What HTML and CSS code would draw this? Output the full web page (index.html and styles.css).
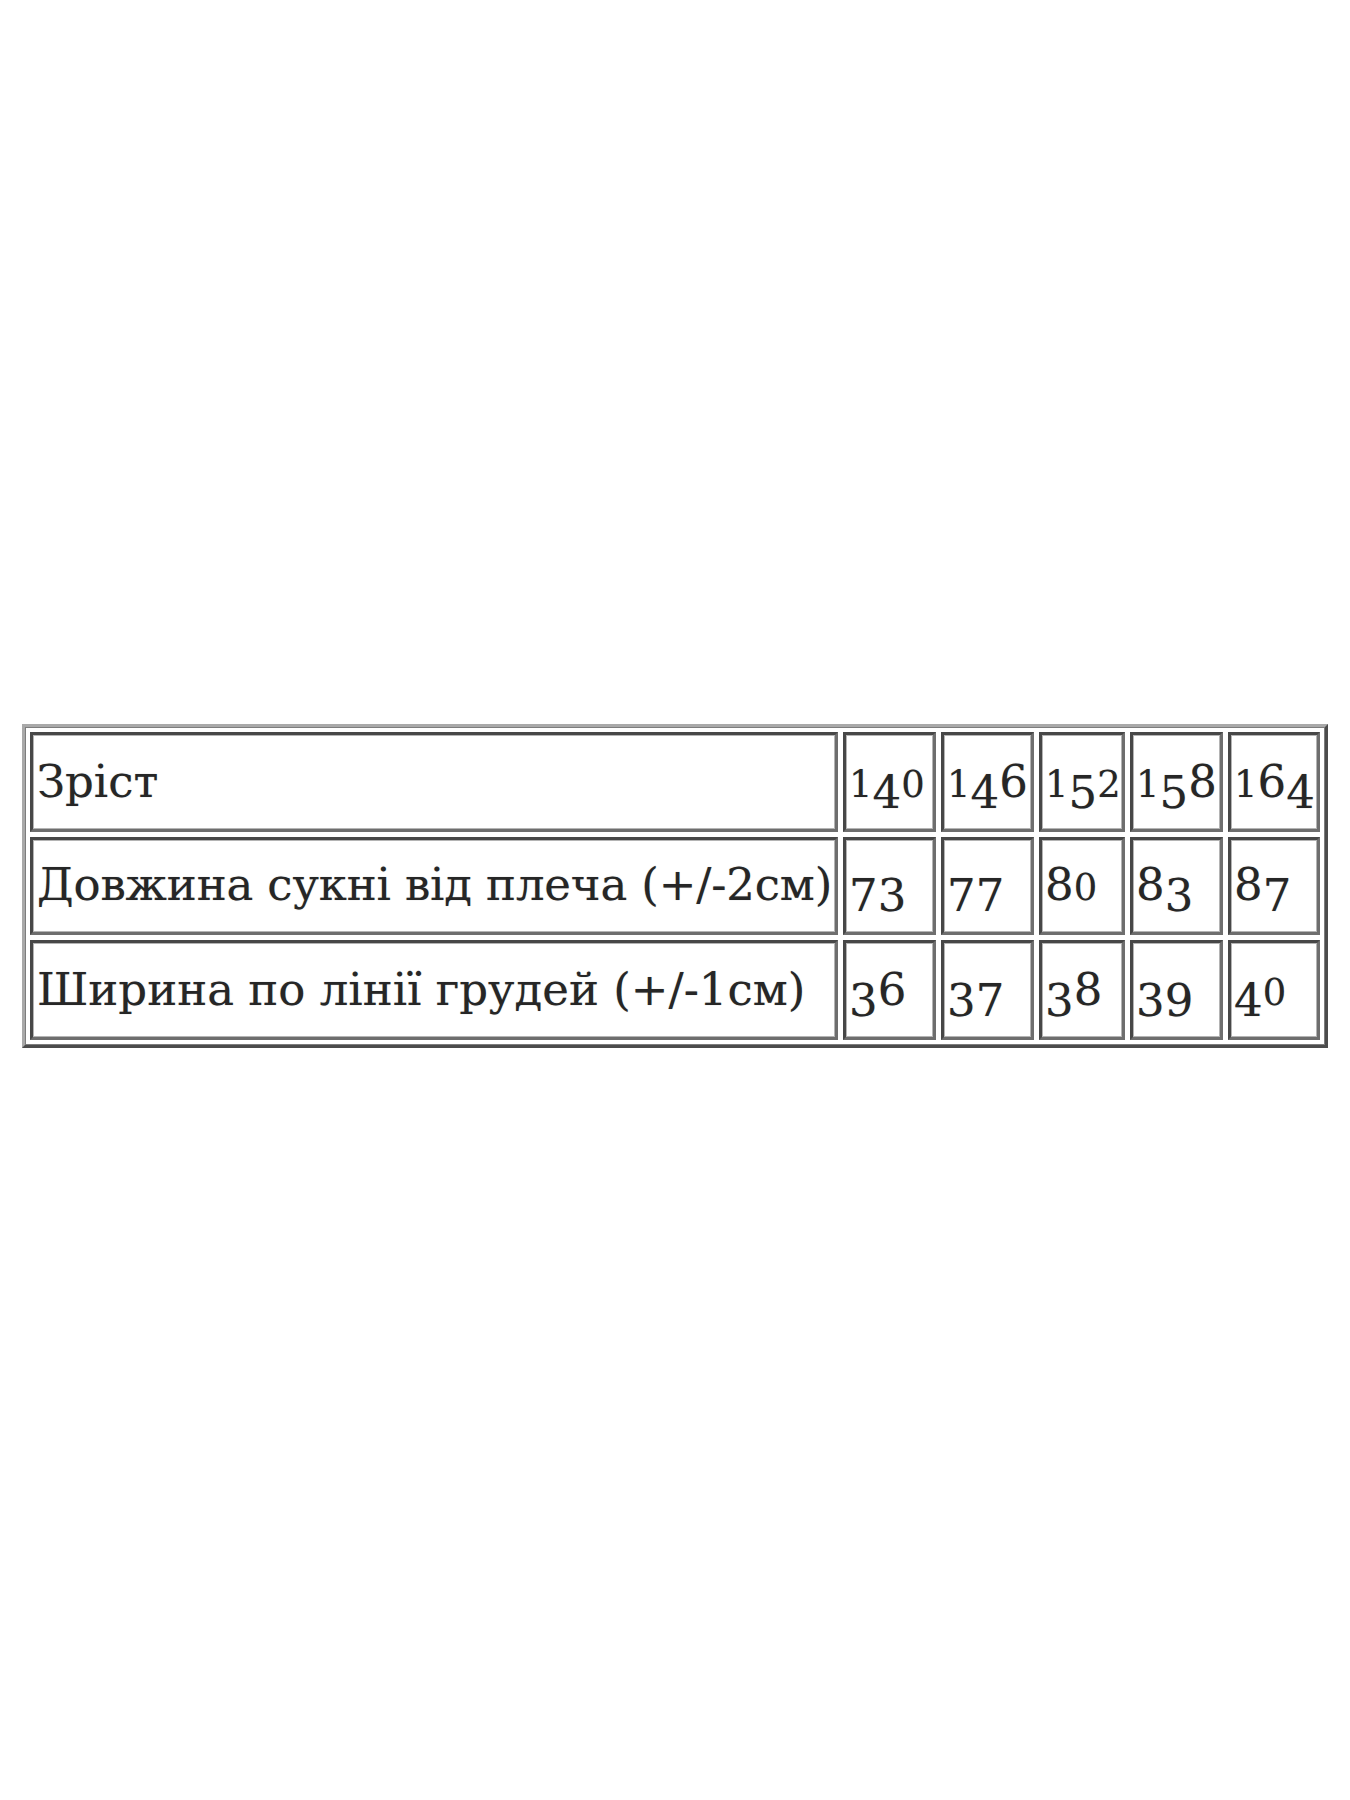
FILE: index.html
```html
<!DOCTYPE html>
<html lang="uk">
<head>
<meta charset="utf-8">
<title>Розмірна сітка</title>
<link rel="stylesheet" href="styles.css">
</head>
<body>
<div class="page">
  <table class="sizes">
    <colgroup>
      <col class="c-label">
      <col class="c-w93">
      <col class="c-w93">
      <col class="c-w86">
      <col class="c-w93">
      <col class="c-w92">
    </colgroup>
    <tr class="r1">
      <td class="label">Зріст</td>
      <td><span class="lo">1</span><span class="dn">4</span><span class="lo">0</span></td>
      <td><span class="lo">1</span><span class="dn">4</span>6</td>
      <td><span class="lo">1</span><span class="dn">5</span><span class="lo">2</span></td>
      <td><span class="lo">1</span><span class="dn">5</span>8</td>
      <td><span class="lo">1</span>6<span class="dn">4</span></td>
    </tr>
    <tr class="r2">
      <td class="label tight">Довжина сукні від плеча (+/-2см)</td>
      <td><span class="dn">7</span><span class="dn">3</span></td>
      <td><span class="dn">7</span><span class="dn">7</span></td>
      <td>8<span class="lo">0</span></td>
      <td>8<span class="dn">3</span></td>
      <td>8<span class="dn">7</span></td>
    </tr>
    <tr class="r3">
      <td class="label">Ширина по лінії грудей (+/-1см)</td>
      <td><span class="dn">3</span>6</td>
      <td><span class="dn">3</span><span class="dn">7</span></td>
      <td><span class="dn">3</span>8</td>
      <td><span class="dn">3</span><span class="dn">9</span></td>
      <td><span class="dn">4</span><span class="lo">0</span></td>
    </tr>
  </table>
</div>
</body>
</html>
```

FILE: styles.css
```css
html, body {
  margin: 0;
  padding: 0;
  background: #ffffff;
}

.page {
  padding: 724px 0 0 22px;
  min-height: 1076px;
}

.sizes {
  border-collapse: separate;
  border-spacing: 5px;
  table-layout: fixed;
  width: 1306px;
  border-style: solid;
  border-width: 3px;
  border-color: #a9a9a9 #4c4c4c #4c4c4c #a9a9a9;
  box-shadow: inset 0 0 0 1px #7d7d7d;
  font-family: "DejaVu Serif", "Liberation Serif", serif;
  font-size: 45px;
  color: #262626;
  text-shadow: 0 0 1px rgba(0, 0, 0, 0.35);
}

.c-label { width: 808px; }
.c-w93 { width: 93px; }
.c-w86 { width: 86px; }
.c-w92 { width: 92px; }

.sizes td {
  box-sizing: border-box;
  border-style: solid;
  border-width: 3px;
  border-color: #474747 #6e6e6e #6e6e6e #474747;
  box-shadow: inset 0 0 0 1px #b4b4b4;
  padding: 20px 2px 0 3px;
  line-height: 54px;
  white-space: nowrap;
  overflow: hidden;
  vertical-align: baseline;
}

.r1 td { height: 100px; }
.r2 td { height: 98px; padding-top: 18px; }
.r3 td { height: 100px; }

.sizes td.label {
  letter-spacing: 0;
  padding-left: 4px;
}

.sizes td.tight {
  letter-spacing: -0.15px;
}

.lo {
  font-size: 0.82em;
}

.dn {
  vertical-align: -0.24em;
  line-height: 0;
}
```
